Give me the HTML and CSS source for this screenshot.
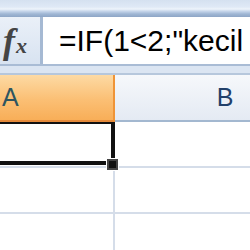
FILE: index.html
```html
<!DOCTYPE html>
<html lang="en">
<head>
	<meta charset="UTF-8">
	<title>Formula</title>
	<link rel="stylesheet" href="styles.css">
</head>
<body>
	<div class="ribbon"></div>

	<div class="formula-bar">
		<div class="fx-box"><span class="fx-f">f</span><span class="fx-x">x</span></div>
		<div class="formula-input">=IF(1&lt;2;"kecil</div>
	</div>

	<div class="band"></div>

	<div class="headers">
		<div class="col-head col-a">A</div>
		<div class="col-head col-b">B</div>
	</div>

	<div class="grid">
		<div class="row row-1">
			<div class="cell cell-a">
				<div class="selection"></div>
				<div class="handle"></div>
			</div>
			<div class="cell cell-b"></div>
		</div>
		<div class="row row-2">
			<div class="cell cell-a"></div>
			<div class="cell cell-b"></div>
		</div>
		<div class="row row-3">
			<div class="cell cell-a"></div>
			<div class="cell cell-b"></div>
		</div>
	</div>
</body>
</html>
```

FILE: styles.css
```css
*{
	padding: 0px;
	margin: 0px;
	box-sizing: border-box;
}
body{
	width: 250px;
	height: 250px;
	overflow: hidden;
	background-color: white;
	font-family: "Liberation Sans", Arial, sans-serif;
}

.ribbon{
	height: 17px;
	background: linear-gradient(to bottom, #d5e1f0 0px, #dfe9f6 7px, #eef4fb 9px, #c9d8ec 11px, #9fb6d4 14px, #8ea6c6 17px);
}

.formula-bar{
	display: flex;
	height: 47px;
	overflow: hidden;
}

.fx-box{
	width: 43px;
	flex-shrink: 0;
	background: linear-gradient(to bottom, #eaf0f8, #d8e3f1);
	border-right: 3px solid #a5b9d3;
	display: flex;
	align-items: center;
	padding-left: 3px;
	color: #444;
	font-family: "Liberation Serif", "Times New Roman", serif;
	font-style: italic;
	font-weight: bold;
}
.fx-f{
	font-size: 36px;
	line-height: 36px;
}
.fx-x{
	font-size: 22px;
	line-height: 22px;
	margin-top: 10px;
	margin-left: 1px;
}

.formula-input{
	flex: 1;
	background-color: white;
	padding-left: 16px;
	font-size: 30px;
	line-height: 48px;
	color: #000;
	white-space: nowrap;
	overflow: hidden;
}

.band{
	height: 11px;
	background-color: #dbe5f2;
	border-top: 2px solid #a9bcd5;
	border-bottom: 2px solid #b6c7dc;
}

.headers{
	display: flex;
	height: 47px;
	overflow: hidden;
}
.col-head{
	display: flex;
	align-items: center;
	font-size: 25px;
	flex-shrink: 0;
}
.col-a{
	width: 115px;
	padding-left: 2px;
	color: #2e5560;
	background: linear-gradient(to bottom, #fddaa4, #fbbf74 55%, #f8ae58);
	border-right: 2px solid #ef9437;
	border-bottom: 2px solid #e58a3a;
}
.col-b{
	width: 220px;
	justify-content: center;
	color: #22406a;
	background: linear-gradient(to bottom, #f6f8fb, #e4eaf3);
	border-bottom: 2px solid #a3b8d0;
}

.grid{
	overflow: hidden;
}
.row{
	display: flex;
	border-bottom: 2px solid #d5dde9;
}
.row-1{
	height: 46px;
}
.row-2{
	height: 46px;
}
.row-3{
	height: 40px;
}
.cell{
	flex-shrink: 0;
	background-color: white;
}
.cell-a{
	width: 115px;
	border-right: 2px solid #d5dde9;
	position: relative;
}
.cell-b{
	width: 220px;
}

.selection{
	position: absolute;
	left: -6px;
	top: 0px;
	width: 121px;
	height: 43px;
	border-top: 2px solid #111;
	border-right: 4px solid #111;
	border-bottom: 4px solid #111;
}
.handle{
	position: absolute;
	left: 107px;
	top: 37px;
	width: 11px;
	height: 11px;
	background-color: #111;
	border: 2px solid #444;
	box-shadow: 0 0 0 1px white;
	z-index: 2;
}
```
